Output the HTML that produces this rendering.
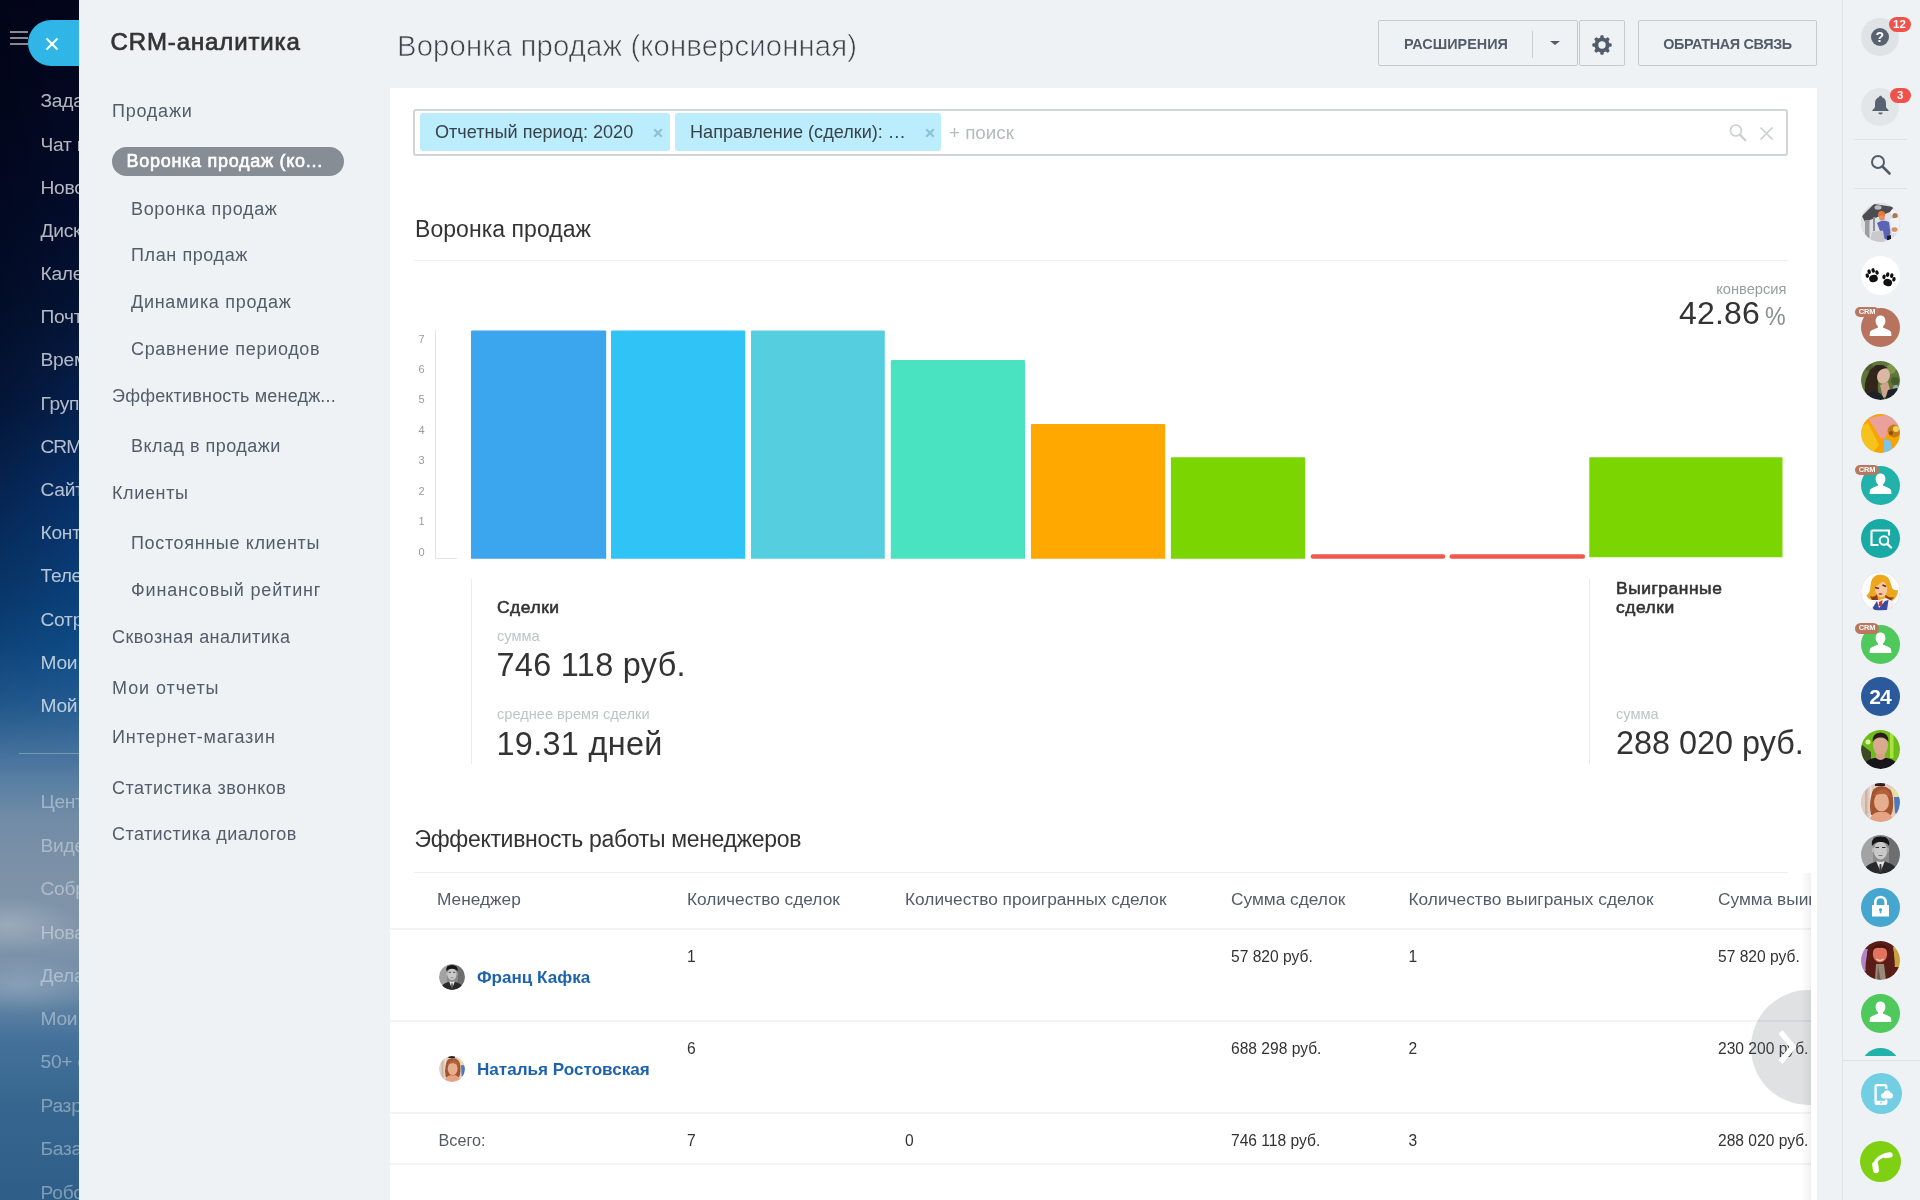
<!DOCTYPE html>
<html lang="ru">
<head>
<meta charset="utf-8">
<title>CRM-аналитика</title>
<style>
*{box-sizing:border-box;margin:0;padding:0}
html,body{width:1920px;height:1200px;overflow:hidden;background:#eef2f4}
body{position:relative;font-family:"Liberation Sans",sans-serif;color:#333}
.abs{position:absolute;white-space:nowrap}
/* ---------- left dark bar ---------- */
#leftbar{position:absolute;left:0;top:0;width:80px;height:1200px;overflow:hidden;
 background:radial-gradient(ellipse 70px 28px at 8px 925px,rgba(255,255,255,.2),rgba(255,255,255,0)),radial-gradient(ellipse 80px 30px at 20px 985px,rgba(255,255,255,.18),rgba(255,255,255,0)),linear-gradient(180deg,#04061c 0px,#030922 100px,#030c2a 200px,#041333 300px,#061f4a 400px,#083169 500px,#0b417b 600px,#104c86 650px,#215a90 700px,#3b6b9a 740px,#587ea3 780px,#728ca6 820px,#7d92a7 880px,#8196ab 940px,#6b89a6 990px,#44719a 1040px,#37678f 1100px,#2e5e88 1200px)}
#leftbar .mi{position:absolute;left:40.5px;margin-top:1px;font-size:19.2px;color:rgba(255,255,255,.7);white-space:nowrap;line-height:24px;letter-spacing:-.25px}
#leftbar .mi.dim{color:rgba(255,255,255,.38)}
#closelabel{position:absolute;left:28px;top:20px;width:60px;height:45.5px;border-radius:23px 0 0 23px;background:#2fb6e6}
/* ---------- panel ---------- */
#panel{position:absolute;left:78.6px;top:0;width:1842px;height:1200px;background:#eef2f4}
.nav{position:absolute;font-size:18px;line-height:24px;color:#535c69;white-space:nowrap;letter-spacing:.55px}
.nav.g{left:112px}
.nav.s{left:131px}
#navactive{position:absolute;left:112px;top:147px;width:232px;height:29px;border-radius:15px;background:#868d95}
#content{position:absolute;left:390px;top:88px;width:1427px;height:1112px;background:#fff;overflow:hidden}
.btn{position:absolute;top:20px;height:46px;border:1px solid #c3cad0;border-radius:2px;color:#535c69;font-weight:700;font-size:14.4px;line-height:46px;text-align:center;white-space:nowrap}
/* ---------- right bar ---------- */
#rightbar{position:absolute;left:1842px;top:0;width:78px;height:1200px;border-left:1px solid #dfe4e7;background:#eef2f4}
.av{position:absolute;left:17px;width:39px;height:39px;border-radius:50%;overflow:hidden}

.chip{top:113px;height:37.5px;background:#bcedfc;border-radius:3px}
.chip .ct{position:absolute;left:15px;top:8.200px;font-size:18.1px;line-height:22px;color:#38424b}
.chip .cx{position:absolute;top:14.5px}
.h2{font-size:23px;line-height:30px;color:#333;letter-spacing:-.1px}
.ax{left:414px;width:15px;text-align:center;font-size:11px;line-height:14px;color:#9a9a9a}
.ttl{font-size:17.4px;font-weight:400;-webkit-text-stroke:.6px #333;color:#333;line-height:20px;letter-spacing:.55px}
.sub{font-size:14.6px;line-height:16px;color:#bfc3c8}
.big{font-size:32.4px;line-height:38px;color:#333}
.th{font-size:17.3px;line-height:22px;color:#535c69}
.td{font-size:15.6px;line-height:20px;color:#333}
.name{font-size:17.1px;line-height:20px;font-weight:700;color:#1d62ad}

.badge{height:14.5px;border-radius:7.5px;background:#f0524b;color:#fff;font-weight:700;font-size:11.5px;line-height:14.5px;text-align:center}
.av2{position:absolute;left:1861px;width:39px;height:39px;border-radius:50%;overflow:hidden}
.crm{left:1855.5px;width:24px;height:10.5px;border-radius:5.5px;background:#b9775f;color:#fff;font-weight:700;font-size:7.5px;line-height:10.5px;text-align:center;letter-spacing:-.2px}
#content,#panelitems,#leftbar,#rightbar{will-change:transform}
</style>
</head>
<body>
<div id="leftbar">
<div style="position:absolute;left:0;top:0;width:80px;height:760px;background:linear-gradient(90deg,rgba(0,0,12,.3),rgba(0,0,12,0) 95%);-webkit-mask-image:linear-gradient(180deg,#000 55%,transparent);mask-image:linear-gradient(180deg,#000 55%,transparent)"></div>
<div class="abs" style="left:10px;top:31px;width:18px;height:2px;background:#8a8794"></div>
<div class="abs" style="left:10px;top:37px;width:18px;height:2px;background:#8a8794"></div>
<div class="abs" style="left:10px;top:43px;width:18px;height:2px;background:#8a8794"></div>
<div id="closelabel"><svg class="abs" style="left:17px;top:17px" width="14" height="14" viewBox="0 0 14 14"><path d="M1.5 1.5L12.5 12.5M12.5 1.5L1.5 12.5" stroke="#fff" stroke-width="2" fill="none"/></svg></div>
<div class="mi" style="top:88px">Задачи и Проекты</div>
<div class="mi" style="top:132px">Чат и звонки</div>
<div class="mi" style="top:175px">Новости</div>
<div class="mi" style="top:218px">Диск</div>
<div class="mi" style="top:261px">Календарь</div>
<div class="mi" style="top:304px">Почта</div>
<div class="mi" style="top:347px">Время и отчеты</div>
<div class="mi" style="top:391px">Группы</div>
<div class="mi" style="top:434px;letter-spacing:-1px">CRM</div>
<div class="mi" style="top:477px">Сайты</div>
<div class="mi" style="top:520px">Контакт-центр</div>
<div class="mi" style="top:563px">Телефония</div>
<div class="mi" style="top:607px">Сотрудники</div>
<div class="mi" style="top:650px">Мои заявки</div>
<div class="mi" style="top:693px">Мой тариф</div>
<div class="abs" style="left:19px;top:753px;width:70px;height:1px;background:rgba(255,255,255,.28)"></div>
<div class="mi dim" style="top:789px">Центр продаж</div>
<div class="mi dim" style="top:833px">Видеоконференции</div>
<div class="mi dim" style="top:876px">Собрания</div>
<div class="mi dim" style="top:920px">Новая компания</div>
<div class="mi dim" style="top:963px">Дела</div>
<div class="mi dim" style="top:1006px">Мои заявки</div>
<div class="mi dim" style="top:1049px">50+ сервисов</div>
<div class="mi dim" style="top:1093px">Разработчикам</div>
<div class="mi dim" style="top:1136px">База знаний</div>
<div class="mi dim" style="top:1180px">Роботы</div>
</div>
<div id="panel"></div>
<div id="panelitems">
<div class="abs" id="ptitle" style="left:110.5px;top:27px;font-size:24px;line-height:30px;font-weight:400;-webkit-text-stroke:.7px #333;color:#333;letter-spacing:.88px">CRM-аналитика</div>
<div id="navactive"></div><div class="nav" style="left:126.5px;top:149px;color:#fff;font-weight:400;-webkit-text-stroke:.6px #fff;letter-spacing:.72px">Воронка продаж (ко...</div>
<div class="nav g" style="top:98.5px;letter-spacing:0.76px">Продажи</div>
<div class="nav s" style="top:196.5px;letter-spacing:0.67px">Воронка продаж</div>
<div class="nav s" style="top:242.5px;letter-spacing:0.60px">План продаж</div>
<div class="nav s" style="top:289.5px;letter-spacing:0.71px">Динамика продаж</div>
<div class="nav s" style="top:336.5px;letter-spacing:0.68px">Сравнение периодов</div>
<div class="nav g" style="top:383.5px;letter-spacing:0.19px">Эффективность менедж...</div>
<div class="nav s" style="top:433.5px;letter-spacing:0.48px">Вклад в продажи</div>
<div class="nav g" style="top:480.5px;letter-spacing:0.63px">Клиенты</div>
<div class="nav s" style="top:530.5px;letter-spacing:0.65px">Постоянные клиенты</div>
<div class="nav s" style="top:577.5px;letter-spacing:0.83px">Финансовый рейтинг</div>
<div class="nav g" style="top:624.5px;letter-spacing:0.46px">Сквозная аналитика</div>
<div class="nav g" style="top:675.5px;letter-spacing:0.94px">Мои отчеты</div>
<div class="nav g" style="top:724.5px;letter-spacing:0.78px">Интернет-магазин</div>
<div class="nav g" style="top:775.5px;letter-spacing:0.54px">Статистика звонков</div>
<div class="nav g" style="top:821.5px;letter-spacing:0.43px">Статистика диалогов</div>
<div class="abs" id="pagetitle" style="left:397px;top:28px;font-size:29.3px;line-height:36px;letter-spacing:.13px;color:#3d4249;-webkit-text-stroke:.7px #eef2f4">Воронка продаж (конверсионная)</div>
<div class="btn" style="left:1378px;width:200px;text-align:left;padding-left:25px">РАСШИРЕНИЯ<span class="abs" style="left:153px;top:10px;width:1px;height:27px;background:#c6cdd3"></span><span class="abs" style="left:170.500px;top:20px;width:0;height:0;border-left:5.2px solid transparent;border-right:5.2px solid transparent;border-top:4.8px solid #535c69"></span></div>
<div class="btn" style="left:1579px;width:46px"><svg class="abs" style="left:11.400px;top:12.700px" width="22" height="22" viewBox="-11 -11 22 22"><g fill="#535c69"><rect x="-1.750" y="-9.700" width="3.500" height="5" rx="1.300" transform="rotate(0)"/><rect x="-1.750" y="-9.700" width="3.500" height="5" rx="1.300" transform="rotate(45)"/><rect x="-1.750" y="-9.700" width="3.500" height="5" rx="1.300" transform="rotate(90)"/><rect x="-1.750" y="-9.700" width="3.500" height="5" rx="1.300" transform="rotate(135)"/><rect x="-1.750" y="-9.700" width="3.500" height="5" rx="1.300" transform="rotate(180)"/><rect x="-1.750" y="-9.700" width="3.500" height="5" rx="1.300" transform="rotate(225)"/><rect x="-1.750" y="-9.700" width="3.500" height="5" rx="1.300" transform="rotate(270)"/><rect x="-1.750" y="-9.700" width="3.500" height="5" rx="1.300" transform="rotate(315)"/></g><circle r="5.650" fill="none" stroke="#535c69" stroke-width="3.900"/></svg></div>
<div class="btn" style="left:1638px;width:179px;letter-spacing:-.35px">ОБРАТНАЯ СВЯЗЬ</div>
</div>
<div id="content">
<div id="cw" style="position:absolute;left:-390px;top:-88px;width:1920px;height:1200px">
<div class="abs" id="filter" style="left:413px;top:109px;width:1375px;height:47px;border:2px solid #d2d5d8;border-radius:3px"></div>
<div class="abs chip" style="left:420px;width:250px"><span class="ct">Отчетный период: 2020</span><svg class="cx" style="left:233.0px" width="10" height="10" viewBox="0 0 10 10"><path d="M1.200 1.200L8.800 8.800M8.800 1.200L1.200 8.800" stroke="#8cc3d7" stroke-width="2.300" fill="none"/></svg></div>
<div class="abs chip" style="left:675px;width:266px"><span class="ct">Направление (сделки): …</span><svg class="cx" style="left:250.0px" width="10" height="10" viewBox="0 0 10 10"><path d="M1.200 1.200L8.800 8.800M8.800 1.200L1.200 8.800" stroke="#8cc3d7" stroke-width="2.300" fill="none"/></svg></div>
<div class="abs" style="left:949px;top:122px;font-size:18.8px;line-height:22px;color:#b4bac1">+ поиск</div>
<svg class="abs" style="left:1728px;top:123px" width="20" height="20" viewBox="0 0 20 20"><circle cx="7.900" cy="7.500" r="5.500" fill="none" stroke="#cdd0d3" stroke-width="1.700"/><path d="M12.100 11.900L17.300 17.200" stroke="#cdd0d3" stroke-width="2.300" stroke-linecap="round"/></svg>
<svg class="abs" style="left:1759px;top:126px" width="15" height="15" viewBox="0 0 15 15"><path d="M1.5 1.5L13.5 13.5M13.5 1.5L1.5 13.5" stroke="#cbced1" stroke-width="1.700" fill="none"/></svg>
<div class="abs h2" style="left:415px;top:213.7px;letter-spacing:.05px">Воронка продаж</div>
<div class="abs" style="left:414px;top:260px;width:1374px;height:1px;background:#eceef0"></div>
<div class="abs" style="right:133.5px;top:281px;font-size:14.7px;line-height:16px;color:#9a9da1">конверсия</div>
<div class="abs" style="left:1679px;top:294px;font-size:32px;line-height:38px;color:#333;letter-spacing:.2px">42.86</div>
<div class="abs" style="left:1765px;top:298.5px;font-size:25px;line-height:34px;color:#8a8d91;transform:scaleX(.93);transform-origin:0 0">%</div>
<div class="abs" style="left:435px;top:330px;width:1px;height:229px;background:#e3e5e7"></div>
<div class="abs" style="left:435px;top:558px;width:22px;height:1px;background:#e3e5e7"></div>
<div class="abs ax" style="top:545.0px">0</div>
<div class="abs ax" style="top:514.0px">1</div>
<div class="abs ax" style="top:483.6px">2</div>
<div class="abs ax" style="top:453.0px">3</div>
<div class="abs ax" style="top:422.5px">4</div>
<div class="abs ax" style="top:392.0px">5</div>
<div class="abs ax" style="top:362.0px">6</div>
<div class="abs ax" style="top:331.7px">7</div>
<svg class="abs" style="left:0;top:0" width="1920" height="600" viewBox="0 0 1920 600"><path fill="#3ba5ee" d="M471 558.8V331.5q0-1 1-1H605.2q1 0 1 1V558.8z"/><path fill="#2fc4f5" d="M611 558.8V331.5q0-1 1-1H744.3q1 0 1 1V558.8z"/><path fill="#55cfe0" d="M751 558.8V331.5q0-1 1-1H883.8q1 0 1 1V558.8z"/><path fill="#4ae3c2" d="M890.8 558.8V361.1q0-1 1-1H1024.0q1 0 1 1V558.8z"/><path fill="#ffa900" d="M1031 558.8V424.9q0-1 1-1H1164.2q1 0 1 1V558.8z"/><path fill="#7bd500" d="M1170.9 558.8V458.2q0-1 1-1H1304.2q1 0 1 1V558.8z"/><path fill="#7bd500" d="M1589.3 557.3V458.2q0-1 1-1H1781.5q1 0 1 1V557.3z"/><rect x="1310.7" y="554.300" width="134.5" height="4.500" rx="2" fill="#f1584e"/><rect x="1449.5" y="554.300" width="135.5" height="4.500" rx="2" fill="#f1584e"/></svg>
<div class="abs" style="left:471px;top:579px;width:1px;height:185px;background:#e9ebed"></div>
<div class="abs ttl" style="left:497px;top:597px">Сделки</div>
<div class="abs sub" style="left:497px;top:628px">сумма</div>
<div class="abs big" style="left:496.5px;top:645.8px;letter-spacing:.33px">746 118 руб.</div>
<div class="abs sub" style="left:497px;top:706px">среднее время сделки</div>
<div class="abs big" style="left:496.5px;top:724.8px;letter-spacing:.33px">19.31 дней</div>
<div class="abs" style="left:1589px;top:579px;width:1px;height:185px;background:#e9ebed"></div>
<div class="abs ttl" style="left:1616px;top:579px;line-height:18.5px;white-space:normal;width:150px">Выигранные сделки</div>
<div class="abs sub" style="left:1616px;top:705.5px">сумма</div>
<div class="abs big" style="left:1616px;top:723.6px;letter-spacing:0">288 020 руб.</div>
<div class="abs h2" style="left:414.5px;top:824px;letter-spacing:-.32px">Эффективность работы менеджеров</div>
<div class="abs" style="left:414px;top:872px;width:1374px;height:1px;background:#eceef0"></div>
<div id="tbl" class="abs" style="left:390px;top:873px;width:1421px;height:327px;overflow:hidden">
<div style="position:absolute;left:-390px;top:-873px;width:1920px;height:1200px">
<div class="abs th" style="left:437px;top:888.3px">Менеджер</div>
<div class="abs th" style="left:687px;top:888.3px">Количество сделок</div>
<div class="abs th" style="left:905px;top:888.3px">Количество проигранных сделок</div>
<div class="abs th" style="left:1231px;top:888.3px">Сумма сделок</div>
<div class="abs th" style="left:1408.5px;top:888.3px">Количество выиграных сделок</div>
<div class="abs th" style="left:1718px;top:888.3px">Сумма выигранных сделок</div>
<div class="abs" style="left:390px;top:928.0px;width:1430px;height:2px;background:#f1f3f4"></div>
<div class="abs" style="left:390px;top:1020.0px;width:1430px;height:2px;background:#f1f3f4"></div>
<div class="abs" style="left:390px;top:1111.8px;width:1430px;height:2px;background:#f1f3f4"></div>
<div class="abs" style="left:390px;top:1162.5px;width:1430px;height:2px;background:#f1f3f4"></div>
<div class="abs td" style="left:687px;top:946.7px">1</div>
<div class="abs td" style="left:1231px;top:946.7px">57 820 руб.</div>
<div class="abs td" style="left:1408.5px;top:946.7px">1</div>
<div class="abs td" style="left:1718px;top:946.7px">57 820 руб.</div>
<div class="abs td" style="left:687px;top:1038.5px">6</div>
<div class="abs td" style="left:1231px;top:1038.5px">688 298 руб.</div>
<div class="abs td" style="left:1408.5px;top:1038.5px">2</div>
<div class="abs td" style="left:1718px;top:1038.5px">230 200 руб.</div>
<div class="abs td" style="left:687px;top:1130.7px">7</div>
<div class="abs td" style="left:905px;top:1130.7px">0</div>
<div class="abs td" style="left:1231px;top:1130.7px">746 118 руб.</div>
<div class="abs td" style="left:1408.5px;top:1130.7px">3</div>
<div class="abs td" style="left:1718px;top:1130.7px">288 020 руб.</div>
<div class="abs td" style="left:438.5px;top:1129.7px;color:#535c69;font-size:16.2px">Всего:</div>
<div class="abs name" style="left:477px;top:967.7px">Франц Кафка</div>
<div class="abs name" style="left:477px;top:1059.7px">Наталья Ростовская</div>
<div class="abs" style="left:439px;top:964px;width:26px;height:26px;border-radius:50%;overflow:hidden"><svg viewBox="0 0 39 39" width="26" height="26" style="position:absolute;left:0;top:0"><defs><filter id="bkf2" x="-10%" y="-10%" width="120%" height="120%"><feGaussianBlur stdDeviation=".7"/></filter><clipPath id="ckf2"><circle cx="19.500" cy="19.500" r="19.500"/></clipPath></defs><g clip-path="url(#ckf2)"><g filter="url(#bkf2)"><rect width="39" height="39" fill="#8b8b8b"/><rect x="0" y="0" width="12" height="39" fill="#a3a3a3"/><rect x="28" y="0" width="11" height="39" fill="#6e6e6e"/><ellipse cx="19.500" cy="15.500" rx="6.800" ry="9" fill="#c9c9c9"/><ellipse cx="12.300" cy="15" rx="1.300" ry="2.600" fill="#bdbdbd"/><ellipse cx="26.700" cy="15" rx="1.300" ry="2.600" fill="#a9a9a9"/><path d="M11 11Q9.500 1.500 19.500 1.500Q29.500 1.500 28 11Q25 6.500 19.500 7Q14 6.500 11 11z" fill="#141414"/><path d="M14.500 12.500H18M21 12.500H24.500" stroke="#333" stroke-width="1.200"/><path d="M17.500 20.500H21.500" stroke="#777" stroke-width="1"/><path d="M3 33Q9 28 15 26.500L19.500 36L24 26.500Q30 28 36 33V39H3z" fill="#2b2b2b"/><path d="M15.500 26L19.500 37L23.500 26Q19.500 28 15.500 26z" fill="#e6e6e6"/><path d="M18.700 29H20.300L20.800 36L19.500 38L18.200 36z" fill="#3a3a3a"/></g></g></svg></div>
<div class="abs" style="left:439px;top:1056px;width:26px;height:26px;border-radius:50%;overflow:hidden"><svg viewBox="0 0 39 39" width="26" height="26" style="position:absolute;left:0;top:0"><defs><filter id="bw22" x="-10%" y="-10%" width="120%" height="120%"><feGaussianBlur stdDeviation=".7"/></filter><clipPath id="cw22"><circle cx="19.500" cy="19.500" r="19.500"/></clipPath></defs><g clip-path="url(#cw22)"><g filter="url(#bw22)"><rect width="39" height="39" fill="#e4cdc2"/><rect x="4" y="0" width="2.500" height="39" fill="#c9b4ac"/><rect x="9" y="0" width="1.500" height="39" fill="#f2e6df"/><path d="M30 0H39V14H32z" fill="#e9dca6"/><path d="M33 14H39V33L34 30z" fill="#4b79ba"/><path d="M14 0H24V3H14z" fill="#2a2420"/><path d="M10 14Q11 3 21 3Q31 4 32 15Q33 26 30 32L10 32Q8 22 10 14z" fill="#a3542e"/><ellipse cx="20.500" cy="19" rx="7.500" ry="9.500" fill="#e6ad8e"/><path d="M12 14Q16 6 24 6Q29 8 30 15Q25 10 20 11Q15 11 12 14z" fill="#b4623a"/><path d="M8 39Q10 30 17 29L25 29Q31 31 32 39z" fill="#e3a384"/></g></g></svg></div>
<div class="abs" style="left:1751px;top:990px;width:115px;height:115px;border-radius:50%;background:rgba(100,106,112,.2)"></div>
<svg class="abs" style="left:1776px;top:1027px" width="24" height="40" viewBox="0 0 24 40"><path d="M4.500 5L17 20L4.500 35" stroke="#fff" stroke-width="5.400" fill="none" stroke-linejoin="miter"/></svg>
</div></div>
<div class="abs" style="left:1801px;top:873px;width:10px;height:327px;background:linear-gradient(90deg,rgba(0,0,0,0),rgba(0,0,0,.06))"></div>
</div>
</div>
<div id="rightbar">
<div style="position:absolute;left:-1843.5px;top:0;width:1920px;height:1200px">
<div class="abs" style="left:1861.5px;top:18px;width:38px;height:38px;border-radius:50%;background:#dfe3e6"></div>
<div class="abs" style="left:1871px;top:27.5px;width:18.5px;height:18.5px;border-radius:50%;background:#596270;color:#fff;font-weight:700;font-size:14px;line-height:19px;text-align:center">?</div>
<div class="abs badge" style="left:1889px;top:17px;width:22px">12</div>
<div class="abs" style="left:1861.5px;top:87.5px;width:38px;height:38px;border-radius:50%;background:#e2e6e9"></div>
<svg class="abs" style="left:1871px;top:95px" width="19" height="21" viewBox="0 0 19 21"><path fill="#596270" d="M9.5 0.8c.9 0 1.5.6 1.5 1.4 2.6.8 4 3 4 5.800v4.300l2.600 2.900v.9H1.400v-.9L4 12.300V8c0-2.800 1.400-5 4-5.800 0-.8.600-1.400 1.500-1.400zM7.300 17.600h4.400c0 1.100-1 2-2.200 2s-2.200-.9-2.200-2z"/></svg>
<div class="abs badge" style="left:1890.5px;top:88px;width:20.5px">3</div>
<div class="abs" style="left:1854px;top:138.5px;width:53px;height:1px;background:#dfe3e6"></div>
<svg class="abs" style="left:1869px;top:153px" width="24" height="24" viewBox="0 0 24 24"><circle cx="9" cy="9" r="6" fill="none" stroke="#525c69" stroke-width="2"/><path d="M13.5 13.5L20.500 20.500" stroke="#525c69" stroke-width="2.600" stroke-linecap="round"/></svg>
<div class="abs" style="left:1854px;top:188px;width:53px;height:1px;background:#dfe3e6"></div>
<div class="av2" style="top:202.8px;background:#ccc;"><svg viewBox="0 0 39 39" width="39" height="39" style="position:absolute;left:0;top:0"><defs><filter id="bo" x="-10%" y="-10%" width="120%" height="120%"><feGaussianBlur stdDeviation=".7"/></filter><clipPath id="co"><circle cx="19.500" cy="19.500" r="19.500"/></clipPath></defs><g clip-path="url(#co)"><g filter="url(#bo)"><rect width="39" height="39" fill="#dfe1e5"/><path d="M1 13L13 1L33 4L29 9L14 15L4 19z" fill="#4c4e52"/><ellipse cx="17" cy="4.500" rx="3.500" ry="2.200" fill="#b9bcc0"/><rect x="4" y="17" width="4.500" height="20" fill="#9a9da3"/><rect x="12" y="14" width="2" height="14" fill="#8d9096"/><path d="M16 20Q22 16 28 19L29.500 30L27 37L21 35L19 28z" fill="#5a63b6"/><circle cx="20.500" cy="11.500" r="3.600" fill="#ea7436"/><ellipse cx="21" cy="15" rx="2.800" ry="2.800" fill="#d9926c"/><circle cx="33" cy="9.500" r="3.300" fill="#f6f6f6"/><ellipse cx="34" cy="13" rx="2.600" ry="3" fill="#a8775c"/><path d="M29 16L39 14V30L31 30z" fill="#f1f2f6"/><ellipse cx="33.500" cy="26.500" rx="3" ry="2.300" fill="#d68f62"/><path d="M11 29L22 27.500L24 39H9z" fill="#c9cacd"/><path d="M26 33L30 32V37H26z" fill="#1d1d22"/></g></g></svg></div>
<div class="av2" style="top:255.5px;background:#fff;"><svg viewBox="0 0 39 39" width="39" height="39" style="position:absolute;left:0;top:0"><g fill="#111"><g transform="translate(11.500 19.500) rotate(-18)"><ellipse cx="0" cy="3.200" rx="4.400" ry="3.600"/><ellipse cx="-5" cy="-1.500" rx="1.700" ry="2.300"/><ellipse cx="-2" cy="-4.600" rx="1.700" ry="2.400"/><ellipse cx="2.200" cy="-4.600" rx="1.700" ry="2.400"/><ellipse cx="5.200" cy="-1.500" rx="1.700" ry="2.300"/></g><g transform="translate(27.500 23.500) rotate(14)"><ellipse cx="0" cy="3.200" rx="4.400" ry="3.600"/><ellipse cx="-5" cy="-1.500" rx="1.700" ry="2.300"/><ellipse cx="-2" cy="-4.600" rx="1.700" ry="2.400"/><ellipse cx="2.200" cy="-4.600" rx="1.700" ry="2.400"/><ellipse cx="5.200" cy="-1.500" rx="1.700" ry="2.300"/></g></g></svg></div>
<div class="av2" style="top:308.2px;background:#b7735d;"><svg viewBox="0 0 39 39" width="39" height="39" style="position:absolute;left:0;top:0"><path fill="#fff" d="M19.500 7.500c3 0 4.900 2.200 4.900 5.300 0 2.300-.9 4.300-2.300 5.400v1.500c2.600.9 6.700 2.300 7.600 3.800.5.900.7 3.100.7 4.500H8.600c0-1.400.2-3.600.7-4.500.9-1.500 5-2.900 7.600-3.800v-1.500c-1.400-1.100-2.300-3.100-2.300-5.400 0-3.100 1.900-5.300 4.900-5.300z"/></svg></div>
<div class="abs crm" style="top:306.7px">CRM</div>
<div class="av2" style="top:361.0px;background:#ccc;"><svg viewBox="0 0 39 39" width="39" height="39" style="position:absolute;left:0;top:0"><defs><filter id="bw1" x="-10%" y="-10%" width="120%" height="120%"><feGaussianBlur stdDeviation=".7"/></filter><clipPath id="cw1"><circle cx="19.500" cy="19.500" r="19.500"/></clipPath></defs><g clip-path="url(#cw1)"><g filter="url(#bw1)"><rect width="39" height="39" fill="#5f7639"/><circle cx="30" cy="8" r="5" fill="#7f9650"/><circle cx="34" cy="20" r="4" fill="#475c2a"/><circle cx="8" cy="6" r="4" fill="#4a5f2c"/><circle cx="35" cy="27" r="3" fill="#9aa9b8"/><path d="M9 9Q16 2 24 5Q18 12 17 22Q16 32 20 39H6Q2 28 5 18z" fill="#33261f"/><ellipse cx="22.500" cy="15" rx="6.300" ry="8" transform="rotate(18 22.500 15)" fill="#dcb7a3"/><path d="M13 5Q20 2 27 7Q21 7 17 11z" fill="#2e221c"/><path d="M19 24L27 21L30 33L22 37z" fill="#cfa48f"/><path d="M6 33Q14 28 20 33L24 39H4zM27 29L36 27L39 32V39H24z" fill="#1c212b"/></g></g></svg></div>
<div class="av2" style="top:413.7px;background:#ccc;"><svg viewBox="0 0 39 39" width="39" height="39" style="position:absolute;left:0;top:0"><defs><filter id="bab" x="-10%" y="-10%" width="120%" height="120%"><feGaussianBlur stdDeviation=".7"/></filter><clipPath id="cab"><circle cx="19.500" cy="19.500" r="19.500"/></clipPath></defs><g clip-path="url(#cab)"><g filter="url(#bab)"><rect width="39" height="39" fill="#f8a300"/><path d="M0 12L7 9L18 31L12 39H0z" fill="#f5c31c"/><path d="M7 4L31 0L39 9L28 17L24 24L20 25z" fill="#e9a19a"/><path d="M23 25L30 27L31 35L23 39z" fill="#7bc4ea"/><circle cx="33" cy="17" r="6.500" fill="#c27c19"/><circle cx="35" cy="15" r="3" fill="#f6d25a"/><circle cx="30" cy="19" r="2" fill="#8a4f10"/></g></g></svg></div>
<div class="av2" style="top:466.4px;background:#21b3ab;"><svg viewBox="0 0 39 39" width="39" height="39" style="position:absolute;left:0;top:0"><path fill="#fff" d="M19.500 7.500c3 0 4.900 2.200 4.900 5.300 0 2.300-.9 4.300-2.300 5.400v1.500c2.600.9 6.700 2.300 7.600 3.800.5.900.7 3.100.7 4.500H8.600c0-1.400.2-3.600.7-4.500.9-1.500 5-2.900 7.600-3.800v-1.500c-1.400-1.100-2.300-3.100-2.300-5.400 0-3.100 1.900-5.300 4.900-5.300z"/></svg></div>
<div class="abs crm" style="top:464.9px">CRM</div>
<div class="av2" style="top:519.1px;background:#19aaa6;"><svg viewBox="0 0 39 39" width="39" height="39" style="position:absolute;left:0;top:0"><path d="M10.500 11.500h17.500v5M10.500 11.500v14.500h7" fill="none" stroke="#fff" stroke-width="2.200"/><circle cx="23" cy="21.500" r="4.300" fill="none" stroke="#fff" stroke-width="2"/><path d="M26.200 24.800L30 28.500" stroke="#fff" stroke-width="2.400" stroke-linecap="round"/></svg></div>
<div class="av2" style="top:571.8px;background:#ccc;"><svg viewBox="0 0 39 39" width="39" height="39" style="position:absolute;left:0;top:0"><defs><filter id="bca" x="-10%" y="-10%" width="120%" height="120%"><feGaussianBlur stdDeviation=".7"/></filter><clipPath id="cca"><circle cx="19.500" cy="19.500" r="19.500"/></clipPath></defs><g clip-path="url(#cca)"><g filter="url(#bca)"><rect width="39" height="39" fill="#fdfdfd"/><path d="M5.500 23Q9 22 9.500 14Q10 5 16 3Q23 1.500 27.500 6Q30 11 31 16Q33 19 37 18Q37 25 31 29Q27 31 24 28L12 28Q7 28 5.500 23z" fill="#eea61c"/><path d="M9 24Q14 26 16 22L17 28L11 28zM24 22Q28 27 33 25Q30 30 25 29z" fill="#8a3c18"/><ellipse cx="20" cy="17" rx="6.200" ry="8.300" transform="rotate(-8 20 17)" fill="#f6c9a2"/><path d="M12 9Q17 5 26 8Q21 9 17.500 13Q14 14 13 19z" fill="#eea61c"/><path d="M14 15.500L18 16.500M21.500 13L25 14.500" stroke="#5a2c14" stroke-width="1.400"/><ellipse cx="19.500" cy="22" rx="2" ry="1" fill="#c8503a"/><path d="M15 29L25 26L33 30L32 37L12 38z" fill="#f4eef0"/><path d="M11.500 36L16 29L18 36L24 29L27.500 28L26 38L14 38.500z" fill="#3b4ba2"/><path d="M18 30L21.500 28L21 34L17.500 34z" fill="#c8402a"/></g></g></svg></div>
<div class="av2" style="top:624.6px;background:#4fc85c;"><svg viewBox="0 0 39 39" width="39" height="39" style="position:absolute;left:0;top:0"><path fill="#fff" d="M19.500 7.500c3 0 4.900 2.200 4.900 5.300 0 2.300-.9 4.300-2.300 5.400v1.500c2.600.9 6.700 2.300 7.600 3.800.5.900.7 3.100.7 4.500H8.600c0-1.400.2-3.600.7-4.500.9-1.500 5-2.900 7.600-3.800v-1.500c-1.400-1.100-2.300-3.100-2.300-5.400 0-3.100 1.900-5.300 4.900-5.300z"/></svg></div>
<div class="abs crm" style="top:623.1px">CRM</div>
<div class="av2" style="top:677.3px;background:#2a5a9b;"><div style="position:absolute;left:0;top:8px;width:39px;text-align:center;color:#fff;font-weight:700;font-size:21px;line-height:24px;letter-spacing:-1px">24</div></div>
<div class="av2" style="top:730.0px;background:#ccc;"><svg viewBox="0 0 39 39" width="39" height="39" style="position:absolute;left:0;top:0"><defs><filter id="bmn" x="-10%" y="-10%" width="120%" height="120%"><feGaussianBlur stdDeviation=".7"/></filter><clipPath id="cmn"><circle cx="19.500" cy="19.500" r="19.500"/></clipPath></defs><g clip-path="url(#cmn)"><g filter="url(#bmn)"><rect width="39" height="39" fill="#6fbb1a"/><rect x="29" y="0" width="3.500" height="28" fill="#a9e23c"/><path d="M0 14L10 22L10 39H0z" fill="#3e4c24"/><circle cx="7" cy="12" r="2.500" fill="#d8f5a0"/><ellipse cx="19.500" cy="15.500" rx="7.500" ry="10" fill="#d9aa8f"/><path d="M11.500 12Q11 3 19.500 2.500Q28 3 27.500 12Q24 7 19.500 7.500Q15 7 11.500 12z" fill="#2b1e19"/><path d="M15 24H24V31H15z" fill="#d3a188"/><path d="M2 34Q10 27 15 28Q19.500 32 24 28Q30 27 37 34V39H2z" fill="#16171a"/></g></g></svg></div>
<div class="av2" style="top:782.7px;background:#ccc;"><svg viewBox="0 0 39 39" width="39" height="39" style="position:absolute;left:0;top:0"><defs><filter id="bw2" x="-10%" y="-10%" width="120%" height="120%"><feGaussianBlur stdDeviation=".7"/></filter><clipPath id="cw2"><circle cx="19.500" cy="19.500" r="19.500"/></clipPath></defs><g clip-path="url(#cw2)"><g filter="url(#bw2)"><rect width="39" height="39" fill="#e4cdc2"/><rect x="4" y="0" width="2.500" height="39" fill="#c9b4ac"/><rect x="9" y="0" width="1.500" height="39" fill="#f2e6df"/><path d="M30 0H39V14H32z" fill="#e9dca6"/><path d="M33 14H39V33L34 30z" fill="#4b79ba"/><path d="M14 0H24V3H14z" fill="#2a2420"/><path d="M10 14Q11 3 21 3Q31 4 32 15Q33 26 30 32L10 32Q8 22 10 14z" fill="#a3542e"/><ellipse cx="20.500" cy="19" rx="7.500" ry="9.500" fill="#e6ad8e"/><path d="M12 14Q16 6 24 6Q29 8 30 15Q25 10 20 11Q15 11 12 14z" fill="#b4623a"/><path d="M8 39Q10 30 17 29L25 29Q31 31 32 39z" fill="#e3a384"/></g></g></svg></div>
<div class="av2" style="top:835.4px;background:#ccc;"><svg viewBox="0 0 39 39" width="39" height="39" style="position:absolute;left:0;top:0"><defs><filter id="bkf" x="-10%" y="-10%" width="120%" height="120%"><feGaussianBlur stdDeviation=".7"/></filter><clipPath id="ckf"><circle cx="19.500" cy="19.500" r="19.500"/></clipPath></defs><g clip-path="url(#ckf)"><g filter="url(#bkf)"><rect width="39" height="39" fill="#8b8b8b"/><rect x="0" y="0" width="12" height="39" fill="#a3a3a3"/><rect x="28" y="0" width="11" height="39" fill="#6e6e6e"/><ellipse cx="19.500" cy="15.500" rx="6.800" ry="9" fill="#c9c9c9"/><ellipse cx="12.300" cy="15" rx="1.300" ry="2.600" fill="#bdbdbd"/><ellipse cx="26.700" cy="15" rx="1.300" ry="2.600" fill="#a9a9a9"/><path d="M11 11Q9.500 1.500 19.500 1.500Q29.500 1.500 28 11Q25 6.500 19.500 7Q14 6.500 11 11z" fill="#141414"/><path d="M14.500 12.500H18M21 12.500H24.500" stroke="#333" stroke-width="1.200"/><path d="M17.500 20.500H21.500" stroke="#777" stroke-width="1"/><path d="M3 33Q9 28 15 26.500L19.500 36L24 26.500Q30 28 36 33V39H3z" fill="#2b2b2b"/><path d="M15.500 26L19.500 37L23.500 26Q19.500 28 15.500 26z" fill="#e6e6e6"/><path d="M18.700 29H20.300L20.800 36L19.500 38L18.200 36z" fill="#3a3a3a"/></g></g></svg></div>
<div class="av2" style="top:888.2px;background:#45a7d0;"><svg viewBox="0 0 39 39" width="39" height="39" style="position:absolute;left:0;top:0"><path d="M14.300 17.500v-3.300a5.200 5.200 0 0 1 10.400 0v3.300" fill="none" stroke="#fff" stroke-width="2.600"/><path fill="#fff" fill-rule="evenodd" d="M11 17h17v11.500H11zM19.500 20.300a1.500 1.500 0 0 0-.8 2.800v2.100h1.600v-2.100a1.500 1.500 0 0 0-.8-2.800z"/></svg></div>
<div class="av2" style="top:940.9px;background:#ccc;"><svg viewBox="0 0 39 39" width="39" height="39" style="position:absolute;left:0;top:0"><defs><filter id="bw3" x="-10%" y="-10%" width="120%" height="120%"><feGaussianBlur stdDeviation=".7"/></filter><clipPath id="cw3"><circle cx="19.500" cy="19.500" r="19.500"/></clipPath></defs><g clip-path="url(#cw3)"><g filter="url(#bw3)"><rect width="39" height="39" fill="#5f1e16"/><path d="M0 8H7L5 30H0z" fill="#b184c4"/><path d="M32 6H39V26H33z" fill="#c9a23e"/><path d="M6 14Q6 1 19 1Q33 1 33 14Q35 28 32 39H6Q3 28 6 14z" fill="#5a1b14"/><ellipse cx="19" cy="13" rx="7.200" ry="8.500" fill="#e2735c"/><path d="M10.500 10Q13 3 19.500 3.500Q26 3 28 10Q23 6 19 7Q14 6 10.500 10z" fill="#4a150f"/><path d="M15.500 18Q19 21 22.500 18" stroke="#f6d8cc" stroke-width="1.100" fill="none"/><path d="M15 23L23 23L25 39H14z" fill="#9a8878"/><path d="M17 24L19.500 39H16z" fill="#6d5a4c"/></g></g></svg></div>
<div class="av2" style="top:993.6px;background:#4fc85c;"><svg viewBox="0 0 39 39" width="39" height="39" style="position:absolute;left:0;top:0"><path fill="#fff" d="M19.500 7.500c3 0 4.900 2.200 4.900 5.300 0 2.300-.9 4.300-2.300 5.400v1.500c2.600.9 6.700 2.300 7.600 3.800.5.900.7 3.100.7 4.500H8.600c0-1.400.2-3.600.7-4.500.9-1.500 5-2.900 7.600-3.800v-1.500c-1.400-1.100-2.300-3.100-2.300-5.400 0-3.100 1.900-5.300 4.900-5.300z"/></svg></div>
<div class="abs" style="left:1861px;top:1048px;width:39px;height:8px;overflow:hidden"><div style="width:39px;height:39px;border-radius:50%;background:#21b3ab"></div></div>
<div class="abs" style="left:1843px;top:1059.5px;width:77px;height:1px;background:#dde2e5"></div>
<div class="abs" style="left:1861px;top:1073px;width:41px;height:41px;border-radius:50%;background:#72cfe3"><svg viewBox="0 0 41 41" width="41" height="41" style="position:absolute;left:0;top:0"><path d="M25.300 16V13.600a1.400 1.400 0 0 0-1.400-1.400H16a1.400 1.400 0 0 0-1.400 1.400V29.500a1.400 1.400 0 0 0 1.400 1.400h7.900a1.400 1.400 0 0 0 1.400-1.400V26.500" fill="none" stroke="#fff" stroke-width="2.300"/><path fill="#fff" d="M14.600 27.800H25.300V30.500H14.600zM22.800 25.600a2.700 2.700 0 0 1-.3-5.400 3.600 3.600 0 0 1 6.900-.8 3.150 3.150 0 0 1 .1 6.200z"/><circle cx="20" cy="29.600" r=".9" fill="#72cfe3"/></svg></div>
<div class="abs" style="left:1860px;top:1140.5px;width:41.5px;height:41.5px;border-radius:50%;background:#7fd013"><svg viewBox="0 0 41.500 41.500" width="41.500" height="41.500" style="position:absolute;left:0;top:0"><g stroke="#fff" fill="none" stroke-linecap="round"><path d="M15.200 23.800L16 29.300" stroke-width="6"/><path d="M26 14.600L30 13.900" stroke-width="5.400"/><path d="M14.800 25Q15.500 15.500 28.500 13.600" stroke-width="3.400"/></g></svg></div>
</div>
</div>
</body>
</html>
